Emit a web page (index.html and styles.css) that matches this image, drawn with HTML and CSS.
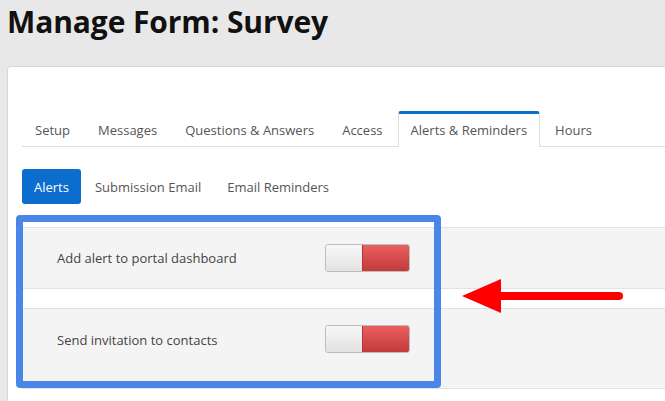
FILE: index.html
```html
<!DOCTYPE html>
<html>
<head>
<meta charset="utf-8">
<link rel="stylesheet" href="styles.css">
</head>
<body>
<h1 class="page-title">Manage Form: Survey</h1>
<div class="card">
  <ul class="tabs">
    <li class="tab">Setup</li>
    <li class="tab">Messages</li>
    <li class="tab">Questions &amp; Answers</li>
    <li class="tab">Access</li>
    <li class="tab active">Alerts &amp; Reminders</li>
    <li class="tab">Hours</li>
  </ul>
  <ul class="pills">
    <li class="pill active">Alerts</li>
    <li class="pill">Submission Email</li>
    <li class="pill">Email Reminders</li>
  </ul>
  <div class="rows">
    <div class="row">
      <span class="label">Add alert to portal dashboard</span>
      <span class="toggle"><span class="toggle-off"></span><span class="toggle-on"></span></span>
    </div>
    <div class="row last">
      <span class="label">Send invitation to contacts</span>
      <span class="toggle"><span class="toggle-off"></span><span class="toggle-on"></span></span>
    </div>
  </div>
</div>
<div class="highlight"></div>
<svg class="arrow" width="170" height="40" viewBox="0 0 170 40">
  <polygon points="2,20 41,3 41,37" fill="#ff0000"/>
  <line x1="38" y1="20" x2="159" y2="20" stroke="#ff0000" stroke-width="8" stroke-linecap="round"/>
</svg>
</body>
</html>
```
FILE: styles.css
```css
html, body {
  margin: 0;
  padding: 0;
}
body {
  background: #e8e8e8;
  font-family: "Open Sans", "Noto Sans", sans-serif;
  width: 665px;
  height: 401px;
  overflow: hidden;
  position: relative;
}
.page-title {
  margin: 0;
  padding: 2px 0 0 7px;
  font-size: 30px;
  line-height: 40px;
  font-weight: 700;
  color: #111;
  letter-spacing: -0.1px;
}
.card {
  margin: 24px 0 0 7px;
  width: 658px;
  height: 335px;
  background: #fff;
  border: 1px solid #d6d6d6;
  border-right: none;
  border-bottom: none;
  border-radius: 4px 0 0 0;
  padding: 44px 0 0 14px;
  box-sizing: border-box;
  overflow: hidden;
}
.tabs {
  list-style: none;
  margin: 0;
  padding: 0;
  display: flex;
  border-bottom: 1px solid #dddddd;
  height: 35px;
}
.tab {
  padding: 0 12px;
  margin-right: 2px;
  font-size: 13px;
  color: #555;
  height: 35px;
  box-sizing: border-box;
  border: 1px solid transparent;
  border-top-width: 3px;
  line-height: 32px;
  white-space: nowrap;
}
.tab.active {
  border-color: #dddddd;
  border-top-color: #0b6dce;
  border-radius: 3px 3px 0 0;
  background: #fff;
  height: 36px;
  border-bottom: none;
}
.pills {
  list-style: none;
  margin: 22px 0 0 0;
  padding: 0;
  display: flex;
}
.pill {
  padding: 0 12px;
  margin-right: 2px;
  height: 35px;
  line-height: 36px;
  font-size: 13px;
  color: #555;
  border-radius: 3px;
}
.pill.active {
  background: #0b6dce;
  color: #fff;
}
.rows {
  margin-top: 23px;
}
.row {
  display: flex;
  align-items: center;
  height: 60px;
  background: #f4f4f4;
  border-top: 1px solid #e2e2e2;
  border-bottom: 1px solid #e2e2e2;
  padding-left: 35px;
  margin-bottom: 19px;
}
.row.last {
  height: 81px;
  align-items: flex-start;
  padding-top: 16px;
  box-sizing: border-box;
}
.label {
  width: 268px;
  font-size: 13px;
  color: #444;
  line-height: 30px;
}
.toggle {
  display: flex;
  width: 85px;
  height: 28px;
  box-sizing: border-box;
  border: 1px solid #bdbdbd;
  border-radius: 3px;
  overflow: hidden;
}
.toggle-off {
  width: 36px;
  background: repeating-linear-gradient(90deg, rgba(0,0,0,0) 0 3px, rgba(0,0,0,0.018) 3px 4px), linear-gradient(#f8f8f8, #e3e3e3);
}
.toggle-on {
  flex: 1;
  background: linear-gradient(#ea5f5f, #c33a3a);
  border-left: 1px solid #b83333;
}
.highlight {
  position: absolute;
  left: 16px;
  top: 215px;
  width: 425px;
  height: 173px;
  box-sizing: border-box;
  border: 7px solid #4a86e8;
  border-radius: 4px;
}
.arrow {
  position: absolute;
  left: 460px;
  top: 276px;
}
```
